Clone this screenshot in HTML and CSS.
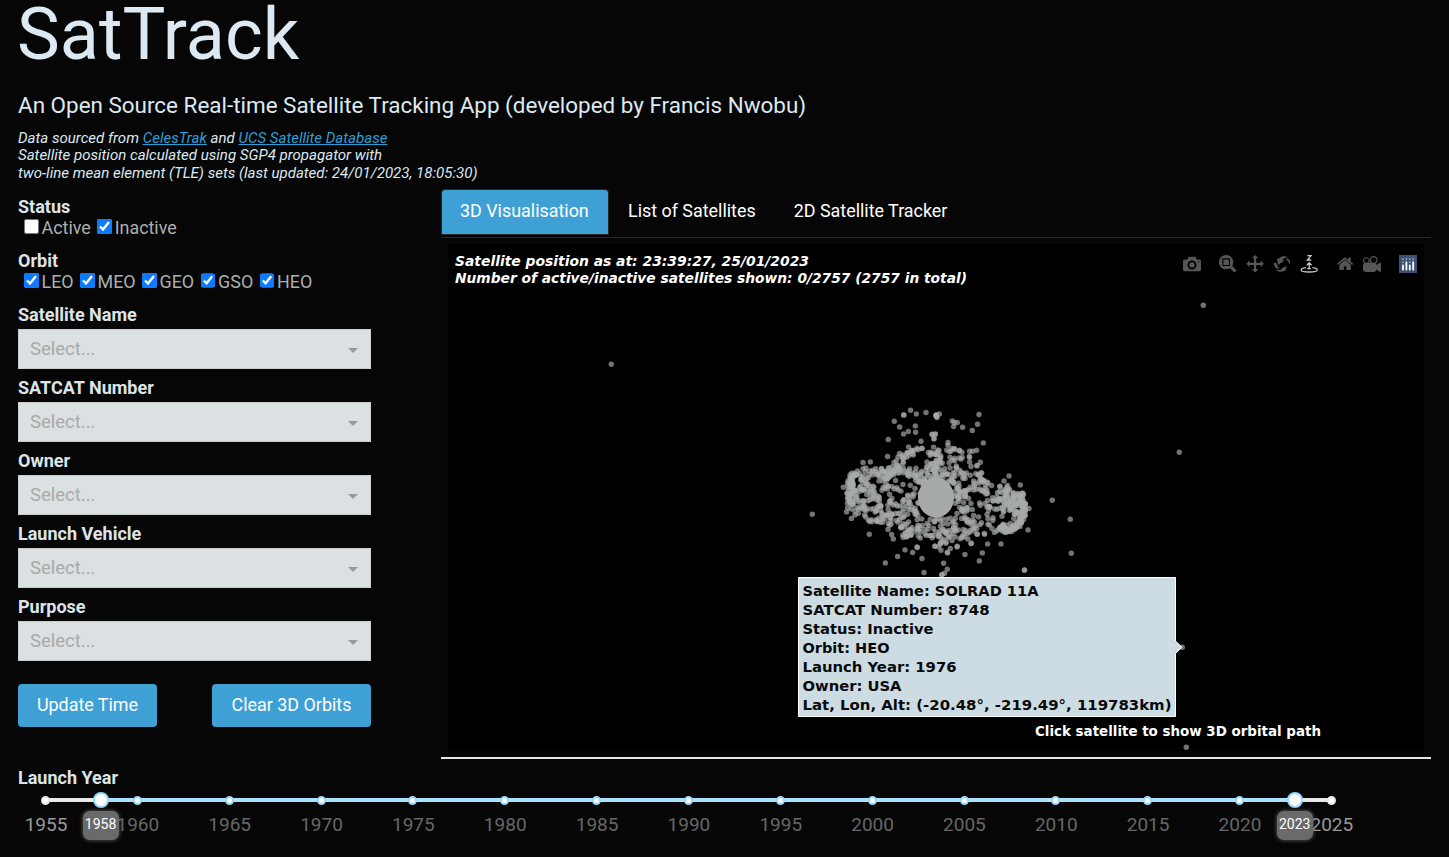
FILE: index.html
```html
<!DOCTYPE html>
<html lang="en">
<head>
<meta charset="utf-8">
<title>SatTrack</title>
<link rel="stylesheet" href="styles.css">
</head>
<body>
<header class="header">
  <h1 class="title">SatTrack</h1>
  <h2 class="subtitle">An Open Source Real-time Satellite Tracking App (developed by Francis Nwobu)</h2>
  <p class="credits">Data sourced from <a href="#">CelesTrak</a> and <a href="#">UCS Satellite Database</a><br>Satellite position calculated using SGP4 propagator with<br>two-line mean element (TLE) sets (last updated: 24/01/2023, 18:05:30)</p>
</header>
<main class="main">
  <section class="filters">
    <div class="label">Status</div>
    <div class="options">
      <label class="opt"><input type="checkbox">Active</label>
      <label class="opt"><input type="checkbox" checked>Inactive</label>
    </div>
    <div class="label">Orbit</div>
    <div class="options">
      <label class="opt"><input type="checkbox" checked>LEO</label>
      <label class="opt"><input type="checkbox" checked>MEO</label>
      <label class="opt"><input type="checkbox" checked>GEO</label>
      <label class="opt"><input type="checkbox" checked>GSO</label>
      <label class="opt"><input type="checkbox" checked>HEO</label>
    </div>
    <div class="field"><div class="label">Satellite Name</div><div class="select"><span>Select...</span><i class="caret"></i></div></div>
    <div class="field"><div class="label">SATCAT Number</div><div class="select"><span>Select...</span><i class="caret"></i></div></div>
    <div class="field"><div class="label">Owner</div><div class="select"><span>Select...</span><i class="caret"></i></div></div>
    <div class="field"><div class="label">Launch Vehicle</div><div class="select"><span>Select...</span><i class="caret"></i></div></div>
    <div class="field"><div class="label">Purpose</div><div class="select"><span>Select...</span><i class="caret"></i></div></div>
    <div class="buttons"><button class="btn update">Update Time</button><button class="btn clear">Clear 3D Orbits</button></div>
  </section>
  <section class="view">
    <nav class="tabs"><a class="tab active">3D Visualisation</a><a class="tab">List of Satellites</a><a class="tab">2D Satellite Tracker</a></nav>
    <svg class="chart" viewBox="448 244 976 507" width="976" height="507">
      <g id="sats" class="sats"></g>
      <ellipse cx="936" cy="497.5" rx="18" ry="20" fill="#a6aba8"/>
      <g class="caption">
        <text x="455" y="266" textLength="354" lengthAdjust="spacingAndGlyphs">Satellite position as at: 23:39:27, 25/01/2023</text>
        <text x="455" y="283" textLength="512" lengthAdjust="spacingAndGlyphs">Number of active/inactive satellites shown: 0/2757 (2757 in total)</text>
      </g>
      <text class="hint" x="1035" y="736" textLength="286" lengthAdjust="spacingAndGlyphs">Click satellite to show 3D orbital path</text>
      <path class="tip" d="M798.5 577.5H1175.5V641L1182 647.3L1175.5 653.5V716.5H798.5Z"/>
      <g class="tiptext">
        <text x="802.5" y="595.6" textLength="236" lengthAdjust="spacingAndGlyphs">Satellite Name: SOLRAD 11A</text>
        <text x="802.5" y="614.6" textLength="187" lengthAdjust="spacingAndGlyphs">SATCAT Number: 8748</text>
        <text x="802.5" y="633.6" textLength="131" lengthAdjust="spacingAndGlyphs">Status: Inactive</text>
        <text x="802.5" y="652.6" textLength="87" lengthAdjust="spacingAndGlyphs">Orbit: HEO</text>
        <text x="802.5" y="671.6" textLength="154" lengthAdjust="spacingAndGlyphs">Launch Year: 1976</text>
        <text x="802.5" y="690.6" textLength="99" lengthAdjust="spacingAndGlyphs">Owner: USA</text>
        <text x="802.5" y="709.6" textLength="369" lengthAdjust="spacingAndGlyphs">Lat, Lon, Alt: (-20.48°, -219.49°, 119783km)</text>
      </g>
      <g class="modebar">
        <path transform="translate(1183 255) scale(.018) matrix(1 0 0 -1 0 850)" d="m500 450c-83 0-150-67-150-150 0-83 67-150 150-150 83 0 150 67 150 150 0 83-67 150-150 150z m400 150h-120c-16 0-34 13-39 29l-31 93c-6 15-23 28-40 28h-340c-16 0-34-13-39-28l-31-94c-6-15-23-28-40-28h-120c-55 0-100-45-100-100v-450c0-55 45-100 100-100h800c55 0 100 45 100 100v450c0 55-45 100-100 100z m-400-550c-138 0-250 112-250 250 0 138 112 250 250 250 138 0 250-112 250-250 0-138-112-250-250-250z m365 380c-19 0-35 16-35 35 0 19 16 35 35 35 19 0 35-16 35-35 0-19-16-35-35-35z"/>
        <path transform="translate(1219 255) scale(.0176) matrix(1 0 0 -1 0 850)" d="m1000-25l-250 251c40 63 63 138 63 218 0 224-182 406-407 406-224 0-406-182-406-406s183-406 407-406c80 0 155 22 218 62l250-250 125 125z m-812 250l0 438 437 0 0-438-437 0z m62 375l313 0 0-312-313 0 0 312z"/>
        <path transform="translate(1246.3 255) scale(.0176) matrix(1 0 0 -1 0 850)" d="m1000 350l-187 188 0-125-250 0 0 250 125 0-188 187-187-187 125 0 0-250-250 0 0 125-188-188 186-187 0 125 252 0 0-250-125 0 187-188 188 188-125 0 0 250 250 0 0-126 187 188z"/>
        <path transform="translate(1273 255) scale(.0176) matrix(1 0 0 -1 0 850)" d="m922 660c-5 4-9 7-14 11-359 263-580-31-580-31l-102 28 58-400c0 1 1 1 2 2 118 108 351 249 351 249s-62 27-100 42c88 83 222 183 347 122 16-8 30-17 44-27-2 1-4 2-6 4z m36-329c0 0 64 229-88 296-62 27-124 14-175-11 157-78 225-208 249-266 8-19 11-31 11-31 2 5 6 15 11 32-5-13-8-20-8-20z m-775-239c70-31 117-50 198-32-121 80-199 346-199 346l-96-15-58-12c0 0 55-226 155-287z m603 133l-317-139c0 0 4-4 19-14 7-5 24-15 24-15s-177-147-389 4c235-287 536-112 536-112l31-22 100 299-4-1z m-298-153c6-4 14-9 24-15 0 0-17 10-24 15z"/>
        <g class="on">
          <path d="M1307.3 255.7H1311L1307.3 260H1311.2"/>
          <path d="M1309.2 263.5V269M1306.8 265.3L1309.2 262.8L1311.6 265.3M1307.3 268.7H1311"/>
          <path d="M1306 267.7C1303 268.1 1301.2 268.9 1301.2 269.9C1301.2 271.2 1304.7 272 1309.2 272S1317.2 271.2 1317.2 269.9C1317.2 268.9 1315.4 268.1 1312.4 267.7"/>
        </g>
        <path transform="translate(1336.9 255) scale(.0176) matrix(1 0 0 -1 0 850)" d="m786 296v-267q0-15-11-26t-25-10h-214v214h-143v-214h-214q-15 0-25 10t-11 26v267q0 1 0 2t0 2l321 264 321-264q1-1 1-4z m124 39l-34-41q-5-5-12-6h-2q-7 0-12 3l-386 322-386-322q-7-4-13-4-7 2-12 7l-35 41q-4 5-3 13t6 12l401 334q18 15 42 15t43-15l136-114v109q0 8 5 13t13 5h107q8 0 13-5t5-13v-227l122-102q5-5 6-12t-4-13z"/>
        <path transform="translate(1363 255) scale(.018) matrix(1 0 0 -1 0 850)" d="m938 413l-188-125c0 37-17 71-44 94 64 38 107 107 107 187 0 121-98 219-219 219-121 0-219-98-219-219 0-61 25-117 66-156h-115c30 33 49 76 49 125 0 103-84 187-187 187s-188-84-188-187c0-57 26-107 65-141-38-22-65-62-65-109v-250c0-70 56-126 125-126h500c69 0 125 56 125 126l188-126c34 0 62 28 62 63v375c0 35-28 63-62 63z m-750 0c-69 0-125 56-125 125s56 125 125 125 125-56 125-125-56-125-125-125z m406-1c-87 0-157 70-157 157 0 86 70 156 157 156s156-70 156-156-70-157-156-157z"/>
      </g>
      <g class="logo">
        <rect x="1399" y="255" width="18" height="18" fill="#3f4f75"/>
        <path stroke="#fff" d="M1403 265.5V269.5M1406.4 262.2V269.5M1409.8 265.5V269.5M1413.2 262.2V269.5"/>
        <path stroke="#7fb5b5" d="M1403 259h.01M1406.4 259h.01M1409.8 259h.01M1413.2 259h.01M1403 262.2h.01M1409.8 262.2h.01"/>
      </g>
    </svg>
  </section>
</main>
<section class="years">
  <div class="label">Launch Year</div>
  <div class="slider" id="slider">
    <div class="rail"></div><div class="range"></div>
  </div>
  <div class="marks" id="marks"></div>
</section>
<script src="app.js"></script>
</body>
</html>
```
FILE: styles.css
```css
* { box-sizing: border-box; }
html, body { margin: 0; height: 857px; overflow: hidden; }
body { background: #060606; color: #adafae; font: 17.9px/20px Roboto, sans-serif; padding: 0 18px; }
.title { margin: 0; height: 91px; font-size: 72px; line-height: 69px; font-weight: 400; color: #dce9f2; text-indent: -1px; }
.subtitle { margin: 0; height: 38px; font-size: 22.45px; line-height: 29px; font-weight: 400; color: #dce9f2; white-space: nowrap; }
.credits { margin: 0; height: 60px; padding-top: .5px; font-size: 15.05px; line-height: 17.5px; font-style: italic; color: #dce9f2; white-space: nowrap; }
.credits a { color: #2a9fd6; text-decoration: underline; }
.main { display: flex; height: 579px; }
.filters { width: 353px; margin-right: 70px; padding-top: 8px; }
.label { height: 21px; font-weight: 700; color: #dde4e8; font-size: 18px; }
.options { display: flex; height: 33px; padding-left: 6px; gap: 6.4px; }
.opt { display: flex; align-items: flex-start; white-space: nowrap; }
.opt input { width: 14.5px; height: 14.5px; margin: 1px 3px 0 0; accent-color: #0d7bff; }
.field { height: 73px; }
.field .label { height: 24px; }
.select { height: 40px; padding: 0 12px 0 11px; display: flex; align-items: center; justify-content: space-between; background: #dbe0e2; border: 1px solid #ccc; color: #aaa; line-height: 38px; font-size: 18.5px; }
.caret { border: 5px solid transparent; border-top-color: #999; border-bottom: 0; margin-top: 3px; }
.buttons { display: flex; justify-content: space-between; margin-top: 14px; }
.btn { height: 43px; border: 0; border-radius: 4px; background: #3fa0d5; color: #fff; font: inherit; padding: 0 0 2px; }
.update { width: 139px; }
.clear { width: 159px; }
.view { width: 990px; height: 570px; border-bottom: 2px solid #dce9f2; flex: none; }
.tabs { display: flex; height: 49px; border-bottom: 1px solid #282828; margin-bottom: 6px; }
.tab { height: 46px; padding: 0 19px; line-height: 44px; color: #fff; white-space: nowrap; }
.tab.active { background: #3fa0d5; border: 1px solid #282828; border-radius: 4px 4px 0 0; padding: 0 18px; line-height: 42px; width: 168px; }
.chart { display: block; margin-left: 7px; background: #000; }
.sats { fill: #a6aba8; }
.sats circle { fill-opacity: .68; }
.caption, .hint { font: 700 14.5px Verdana, "DejaVu Sans", sans-serif; fill: #fff; }
.caption { font-style: italic; }
.tip { fill: #cddce3; stroke: #fff; stroke-width: 1; }
.tiptext { font: 700 14.3px Verdana, "DejaVu Sans", sans-serif; fill: #0a0a0a; }
.modebar { fill: #565656; }
.on { fill: none; stroke: #c8c8c8; stroke-width: 1.3; }
.logo path { stroke-width: 1.8; stroke-linecap: round; }
.years { height: 89px; }
.slider { position: relative; height: 22px; margin: 0 99.5px 0 27.5px; }
.rail, .range { position: absolute; height: 4px; top: 9px; }
.rail { left: 0; right: 0; background: #e9e9e9; }
.range { left: 4.2857%; width: 92.857%; background: #abe2fb; }
.dot { position: absolute; top: 6.5px; width: 9px; height: 9px; margin-left: -4.5px; border: 2px solid #96dbfa; border-radius: 50%; background: #fff; }
.dot.out { border-color: #e9e9e9; }
.handle { position: absolute; top: 3px; width: 16px; height: 16px; margin-left: -8px; border: 2px solid #96dbfa; border-radius: 50%; background: #fff; }
.bubble { position: absolute; top: 22px; width: 36px; height: 29px; margin-left: -18px; border-radius: 7px; background: #6a6a6a; box-shadow: 0 0 4px #6a6a6a; color: #fff; font-size: 14px; line-height: 26px; text-align: center; z-index: 2; }
.marks { display: flex; justify-content: space-between; margin: 4px 99px 0 28px; font-size: 19px; color: #666; }
.marks span { width: 0; display: flex; justify-content: center; }
.marks span:first-child, .marks span:last-child { color: #999; }
```
FILE: app.js
```js
const NS = 'http://www.w3.org/2000/svg';
const sats = document.getElementById('sats');
let seed = 11;
function rnd() { seed = (seed * 16807) % 2147483647; return seed / 2147483647; }
function dot(x, y, r = 2.7) {
  const c = document.createElementNS(NS, 'circle');
  c.setAttribute('cx', (x + .3).toFixed(1));
  c.setAttribute('cy', (y + .2).toFixed(1));
  c.setAttribute('r', r);
  sats.appendChild(c);
}
// Plot lists of offsets, in thirds of a unit, from an origin.
function points(ox, oy, list) {
  for (let i = 0; i < list.length; i += 2) dot(ox + list[i] / 3, oy + list[i + 1] / 3);
}
// Scatter satellites along an orbital arc.
function arc(ox, oy, spread, step, p) {
  if (step > 2) { spread *= 1.6; step *= 1.55; }
  for (let i = 0; i + 3 < p.length; i += 2) {
    const dx = p[i + 2] - p[i], dy = p[i + 3] - p[i + 1];
    const n = Math.max(1, Math.round(Math.hypot(dx, dy) / step));
    for (let k = 0; k <= n; k++) {
      dot(ox + (p[i] + dx * k / n + (rnd() - .5) * spread) / 3, oy + (p[i + 1] + dy * k / n + (rnd() - .5) * spread) / 3);
    }
  }
}
[1203,305,611,364,1179,452,812,514,1052,500,1070,519,1071,553,1024,570,1186,747,1182,647].forEach((v, i, a) => { if (i % 2 === 0) dot(v, a[i + 1]); });
points(820, 390, [271,60,250,74,251,74,288,71,317,67,348,75,349,78,347,74,222,93,238,110,285,107,264,124,250,131,286,126,336,133,345,131,341,146,204,148,302,153,265,170,202,199,238,190,221,217,290,174,305,174,305,175,128,217,150,215,69,291,79,365,104,374,133,374,147,432,203,418,214,433,219,446,249,442,254,479,277,487,290,470,291,472,305,505,232,499,195,518,311,547,344,468,355,470,
  320,215,287,234,286,245,248,283,226,271,262,315,284,295,270,285,140,355,128,348,122,268,132,258,330,388,345,388,320,400,265,395,262,372,293,405,275,412,228,390,225,370,185,300,215,325,208,312,176,272,190,262,180,345,160,355,208,405,294,437,345,425]);
points(930, 390, [146,73,142,102,126,121,97,111,81,97,66,92,72,97,70,109,27,71,17,76,20,82,18,78,5,132,15,132,11,145,159,158,53,157,53,165,72,175,88,180,87,182,118,183,127,183,139,180,117,199,118,201,118,215,122,229,150,216,141,226,236,257,221,272,270,284,184,286,296,355,293,419,212,461,172,461,123,459,122,460,156,488,147,512,104,493,81,468,80,470,40,519,51,537,43,549,34,555,35,553,283,539,14,468,32,480,30,462,51,486,60,475,52,488,140,431,141,432,162,430,163,432,75,384,
  120,255,108,248,130,272,132,285,100,337,122,340,110,352,126,358,130,376,145,380,88,352,80,370,60,384,70,410,128,390,150,345,148,338,115,325,164,340,170,350,215,378,185,415,245,335,250,325,240,400]);
// GEO belt, left limb
arc(820, 390, 18, 1.8, [98,255,90,285,88,345]);
arc(820, 390, 22, 3, [105,250,115,280,112,300,105,340,100,370]);
arc(820, 390, 14, 4, [98,250,140,243]);
arc(820, 390, 12, 2.2, [150,245,220,240,240,212,265,188,290,188]);
arc(820, 390, 12, 3, [175,250,200,258,240,240,270,245,275,262,300,272]);
arc(820, 390, 10, 4, [150,268,140,285,120,295,145,310,165,285]);
arc(820, 390, 10, 4, [205,255,190,290,240,297]);
arc(820, 390, 10, 4, [155,315,178,325,150,330]);
arc(820, 390, 12, 4, [110,350,135,335,130,360]);
arc(820, 390, 10, 3, [142,385,180,397]);
arc(820, 390, 16, 3, [160,365,185,350,185,380,205,395,210,360]);
arc(820, 390, 14, 3, [200,342,262,338,270,355,300,380]);
arc(820, 390, 15, 2.6, [240,360,245,410,265,440,280,420,320,410]);
arc(820, 390, 10, 4, [308,438,328,438]);
arc(820, 390, 10, 3, [325,190,358,186]);
arc(820, 390, 16, 3, [290,258,315,240,330,235,360,215]);
arc(820, 390, 14, 3, [295,285,310,270,350,260]);
arc(820, 390, 14, 5, [265,305,300,320,290,350]);
// Low orbit shell
arc(930, 390, 14, 3, [5,180,25,195,25,220,5,240]);
arc(930, 390, 12, 6, [50,175,65,178,62,210,88,210,90,195]);
arc(930, 390, 20, 2.6, [0,250,45,250,85,240,115,265]);
arc(930, 390, 18, 3, [45,262,80,290,100,310,75,315,120,305,135,295]);
arc(930, 390, 12, 3, [145,235,148,270,170,275,175,285]);
arc(930, 390, 14, 3, [155,295,165,310,190,325,215,320,235,292,205,298]);
arc(930, 390, 12, 4, [75,340,90,325]);
arc(930, 390, 14, 4, [165,355,190,360,215,355,240,345]);
arc(930, 390, 14, 4, [85,365,105,355,100,390,125,395,135,410,110,435]);
arc(930, 390, 14, 4, [155,400,180,395,180,380]);
arc(930, 390, 18, 3, [20,420,50,412,65,440,90,430,105,440]);
arc(930, 390, 14, 6, [5,395,55,385,70,410,90,415]);
arc(930, 390, 14, 5, [0,430,20,440,35,460,55,450]);
// GEO belt, right limb
arc(930, 390, 14, 1.8, [245,315,272,315,280,345,278,382,264,405,235,422,205,415]);
arc(930, 390, 16, 2.2, [225,350,250,335,266,350,262,375,235,360]);
arc(930, 390, 14, 4, [222,335,240,312,210,340]);
arc(930, 390, 12, 3, [200,418,225,408,250,405]);

const slider = document.getElementById('slider');
const marks = document.getElementById('marks');
const pct = y => (y - 1955) / 70 * 100;
function put(cls, year, text) {
  const e = document.createElement('div');
  e.className = cls;
  e.style.left = pct(year) + '%';
  e.textContent = text || '';
  slider.appendChild(e);
}
for (let y = 1955; y <= 2025; y += 5) {
  put(y < 1958 || y > 2023 ? 'dot out' : 'dot', y);
  const s = document.createElement('span');
  s.textContent = y;
  marks.appendChild(s);
}
for (const y of [1958, 2023]) { put('handle', y); put('bubble', y, String(y)); }
```
